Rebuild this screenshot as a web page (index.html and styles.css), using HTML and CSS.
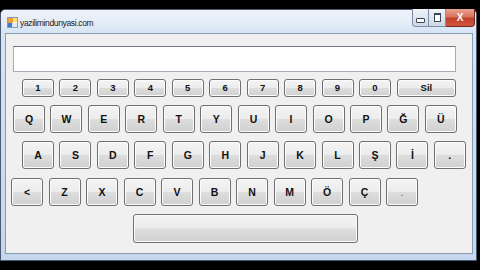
FILE: index.html
```html
<!DOCTYPE html>
<html lang="tr">
<head>
    <meta charset="UTF-8">
    <title>yazilimindunyasi.com</title>
    <link rel="stylesheet" href="styles.css">
</head>
<body>
    <div class="window">
        <div class="titlebar">
            <svg class="app-icon" width="11" height="11" viewBox="0 0 11 11">
                <rect x="0.5" y="0.5" width="10" height="10" fill="#fff" stroke="#8a9bb0"/>
                <rect x="1" y="1" width="5" height="5" fill="#f0a030"/>
                <rect x="6" y="1" width="4" height="4" fill="#ffe070"/>
                <rect x="1" y="6" width="4" height="4" fill="#3a78d0"/>
                <rect x="5" y="6" width="5" height="4" fill="#e0e8f4"/>
            </svg>
            <span class="title">yazilimindunyasi.com</span>
            <div class="controls">
                <span class="ctl ctl-min"><i class="glyph-min"></i></span>
                <span class="ctl ctl-max"><i class="glyph-max"></i></span>
                <span class="ctl ctl-close">X</span>
            </div>
        </div>
        <div class="client">
            <div class="textbox"></div>
            <div class="row row-num">
                <button class="key key-sm">1</button>
                <button class="key key-sm">2</button>
                <button class="key key-sm">3</button>
                <button class="key key-sm">4</button>
                <button class="key key-sm">5</button>
                <button class="key key-sm">6</button>
                <button class="key key-sm">7</button>
                <button class="key key-sm">8</button>
                <button class="key key-sm">9</button>
                <button class="key key-sm">0</button>
                <button class="key key-sm key-del">Sil</button>
            </div>
            <div class="row row-q">
                <button class="key">Q</button>
                <button class="key">W</button>
                <button class="key">E</button>
                <button class="key">R</button>
                <button class="key">T</button>
                <button class="key">Y</button>
                <button class="key">U</button>
                <button class="key">I</button>
                <button class="key">O</button>
                <button class="key">P</button>
                <button class="key">Ğ</button>
                <button class="key">Ü</button>
            </div>
            <div class="row row-a">
                <button class="key">A</button>
                <button class="key">S</button>
                <button class="key">D</button>
                <button class="key">F</button>
                <button class="key">G</button>
                <button class="key">H</button>
                <button class="key">J</button>
                <button class="key">K</button>
                <button class="key">L</button>
                <button class="key">Ş</button>
                <button class="key">İ</button>
                <button class="key">.</button>
            </div>
            <div class="row row-z">
                <button class="key">&lt;</button>
                <button class="key">Z</button>
                <button class="key">X</button>
                <button class="key">C</button>
                <button class="key">V</button>
                <button class="key">B</button>
                <button class="key">N</button>
                <button class="key">M</button>
                <button class="key">Ö</button>
                <button class="key">Ç</button>
                <button class="key key-thin">.</button>
            </div>
            <div class="row row-space">
                <button class="key key-space"></button>
            </div>
        </div>
    </div>
</body>
</html>
```

FILE: styles.css
```css
html, body {
    margin: 0;
    padding: 0;
    background-color: #000;
    width: 480px;
    height: 270px;
    overflow: hidden;
}

.window {
    margin-top: 9px;
    width: 475px;
    height: 250px;
    border: 1px solid #4a5a70;
    border-radius: 5px 5px 0 0;
    background: linear-gradient(to bottom, #e2ebf6 0%, #d6e4f3 12%, #c4d7ee 100%);
    display: flex;
    flex-direction: column;
}

.titlebar {
    height: 23px;
    display: flex;
    align-items: center;
    padding-left: 6px;
    background: linear-gradient(to bottom, #eef3fa 0%, #e3ecf7 60%, #d5e3f3 100%);
    border-radius: 5px 5px 0 0;
}

.app-icon {
    margin-top: 2px;
}

.title {
    margin-left: 2px;
    margin-top: 2px;
    font-family: "Liberation Sans", Arial, sans-serif;
    font-size: 8.5px;
    letter-spacing: -0.35px;
    color: #1a1a1a;
}

.controls {
    margin-left: auto;
    margin-right: 1px;
    align-self: flex-start;
    margin-top: -1px;
    display: flex;
}

.ctl {
    height: 18px;
    border: 1px solid #7e8ea4;
    border-top: none;
    display: flex;
    align-items: center;
    justify-content: center;
    box-sizing: border-box;
}

.ctl-min {
    width: 17px;
    border-radius: 0 0 0 4px;
    background: linear-gradient(to bottom, #f0f4f9 0%, #dfe6ef 50%, #cdd7e4 100%);
}

.ctl-max {
    width: 17px;
    border-left: none;
    background: linear-gradient(to bottom, #f0f4f9 0%, #dfe6ef 50%, #cdd7e4 100%);
}

.ctl-close {
    width: 29px;
    border-left: none;
    border-color: #6e2a22;
    border-radius: 0 0 4px 0;
    background: linear-gradient(to bottom, #e9a391 0%, #d9735f 45%, #c2402b 55%, #d0543d 100%);
    color: #fff;
    font-family: "Liberation Sans", Arial, sans-serif;
    font-size: 10px;
    font-weight: bold;
}

.glyph-min {
    display: block;
    width: 7px;
    height: 3px;
    margin-top: 5px;
    border: 1px solid #3c4656;
    background: #fff;
    border-radius: 1px;
}

.glyph-max {
    display: block;
    width: 5px;
    height: 6px;
    border: 1px solid #3c4656;
    border-top-width: 2px;
    background: #fff;
}

.client {
    margin: 0 3px 6px 4px;
    flex: 1;
    background-color: #f0f0f0;
    border: 1px solid #8b9bb0;
}

.textbox {
    margin: 12px 0 0 7px;
    width: 441px;
    height: 24px;
    background-color: #fff;
    border: 1px solid #a6acb8;
    border-top-color: #6e7686;
}

.row {
    display: flex;
    gap: 5.45px;
}

.row-num {
    margin: 7px 0 0 16px;
}

.row-q {
    margin: 8px 0 0 7px;
}

.row-a {
    margin: 8px 0 0 16px;
}

.row-z {
    margin: 9px 0 0 5px;
    gap: 5.5px;
}

.row-space {
    margin: 8px 0 0 127px;
}

.key {
    width: 32px;
    height: 28px;
    padding: 0;
    margin: 0;
    box-sizing: border-box;
    border: 1px solid #707070;
    border-radius: 3px;
    background: linear-gradient(to bottom, #f4f4f4 0%, #ececec 48%, #dddddd 52%, #d0d0d0 100%);
    box-shadow: inset 0 0 0 1px #fcfcfc;
    font-family: "Liberation Sans", Arial, sans-serif;
    font-size: 10.5px;
    font-weight: bold;
    color: #111;
    line-height: 1;
}

.key-sm {
    height: 18px;
    font-size: 9.5px;
}

.key-del {
    width: 59px;
    margin-left: 0.5px;
}

.key-thin {
    font-weight: normal;
    color: #555;
}

.key-space {
    width: 225px;
    height: 29px;
}
```
